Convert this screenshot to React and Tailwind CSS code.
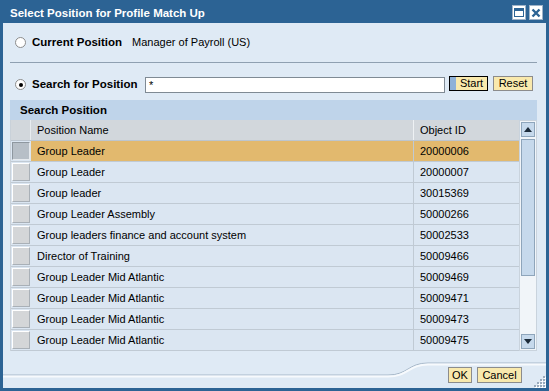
import React from "react";

const rows = [
  ["Group Leader", "20000006"],
  ["Group Leader", "20000007"],
  ["Group leader", "30015369"],
  ["Group Leader Assembly", "50000266"],
  ["Group leaders finance and account system", "50002533"],
  ["Director of Training", "50009466"],
  ["Group Leader Mid Atlantic", "50009469"],
  ["Group Leader Mid Atlantic", "50009471"],
  ["Group Leader Mid Atlantic", "50009473"],
  ["Group Leader Mid Atlantic", "50009475"],
];

function Radio({ checked }) {
  return (
    <span className="w-[11px] h-[11px] rounded-full border border-[#8c8c8c] bg-white flex items-center justify-center shrink-0">
      {checked && <span className="w-[4px] h-[4px] rounded-full bg-black" />}
    </span>
  );
}

export default function App() {
  return (
    <div
      className="w-[549px] h-[391px] bg-[#2c6394] flex flex-col px-[3px] pb-[3px] text-black"
      style={{ fontFamily: '"Liberation Sans", Arial, sans-serif' }}
    >
      {/* Title bar */}
      <div className="h-[23px] flex items-center pl-[7px] pr-[3px]">
        <div className="text-white font-bold text-[11.5px] leading-none pt-[4px] flex-1">
          Select Position for Profile Match Up
        </div>
        <div className="flex gap-[3px] pt-[2px]">
          <div className="w-[14px] h-[15px] bg-white border border-[#9fb3c8] flex items-center justify-center">
            <div className="w-[10px] h-[9px] border border-[#2c6394] border-t-[3px]" />
          </div>
          <div className="w-[14px] h-[15px] bg-white border border-[#9fb3c8] flex items-center justify-center">
            <svg width="10" height="10" viewBox="0 0 10 10">
              <path d="M1.5 1.5 L8.5 8.5 M8.5 1.5 L1.5 8.5" stroke="#2c6394" strokeWidth="2.4" />
            </svg>
          </div>
        </div>
      </div>

      {/* Body */}
      <div className="flex-1 bg-[#dfeaf5] flex flex-col pl-[7px] pr-[9px] relative">
        {/* Current position */}
        <div className="mt-[11px] h-[16px] flex items-center pl-[5px]">
          <Radio />
          <span className="ml-[6px] font-bold text-[11.5px] pt-px">Current Position</span>
          <span className="ml-[10px] text-[11px] pt-px">Manager of Payroll (US)</span>
        </div>

        <div className="mt-[12px] h-px bg-[#8fa0b1]" />

        {/* Search */}
        <div className="mt-[13px] h-[17px] flex items-center pl-[5px]">
          <Radio checked />
          <span className="ml-[6px] w-[113px] font-bold text-[11.5px]">Search for Position</span>
          <div className="w-[300px] h-[16px] mt-[1px] bg-white border border-[#7f8a94] text-[11px] leading-[14px] pl-[3px]">
            *
          </div>
          <div className="ml-[4px] w-[39px] h-[15px] self-start bg-[#f9e9ad] border border-black flex text-[11px] leading-[13px]">
            <div className="w-[6px] bg-[#8fb1d8]" />
            <div className="flex-1 text-center">Start</div>
          </div>
          <div className="ml-[5px] w-[40px] h-[15px] self-start bg-[#f9e9ad] border border-[#8c8c8c] text-[11px] leading-[13px] text-center">
            Reset
          </div>
        </div>

        {/* Table */}
        <div className="mt-[7px] flex flex-col">
          <div className="h-[20px] bg-[#bfd4ea] flex items-center pl-[10px] pt-px font-bold text-[11.5px]">
            Search Position
          </div>
          <div className="flex">
            <div className="w-[509px] flex flex-col border-l border-[#c9d1d9]">
              <div className="h-[21px] flex bg-[#d2d7dc] border-b border-[#bcc5ce] text-[11px]">
                <div className="w-[20px] border-r border-[#e8ecf0]" />
                <div className="w-[383px] border-r border-[#eef1f4] pl-[6px] pt-px flex items-center">Position Name</div>
                <div className="flex-1 pl-[6px] pt-px flex items-center">Object ID</div>
              </div>
              {rows.map(([name, id], i) => {
                const sel = i === 0;
                return (
                  <div
                    key={i}
                    className={
                      "h-[21px] flex text-[11px] border-b border-[#c0cad4] " +
                      (sel ? "bg-[#e2b96e]" : "bg-[#dbe6f2]")
                    }
                  >
                    <div className="w-[20px] p-[1px] bg-[#dbe6f2]">
                      <div
                        className={
                          "w-full h-full border " +
                          (sel
                            ? "bg-[#b7bfc7] border-t-[#8e979f] border-l-[#8e979f] border-r-[#e6eaee] border-b-[#e6eaee]"
                            : "bg-[#d4d6d8] border-t-white border-l-white border-r-[#a9b0b7] border-b-[#a9b0b7]")
                        }
                      />
                    </div>
                    <div className="w-[383px] border-r border-[#c0cad4] pl-[6px] pt-px flex items-center">{name}</div>
                    <div className="flex-1 pl-[6px] pt-px flex items-center">{id}</div>
                  </div>
                );
              })}
            </div>
            {/* Scrollbar */}
            <div className="w-[18px] bg-[#f1f5f9] border border-[#c9d3dd] flex flex-col items-center pt-px pb-px">
              <div className="w-[14px] h-[15px] bg-[#c6d9ec] border border-[#8ea5bb] flex items-center justify-center">
                <svg width="8" height="5" viewBox="0 0 8 5">
                  <path d="M0 5 L4 0 L8 5 Z" fill="#1c2b3a" />
                </svg>
              </div>
              <div className="w-[14px] h-[137px] mt-[2px] bg-[#c6d9ec] border border-[#8ea5bb]" />
              <div className="flex-1" />
              <div className="w-[14px] h-[15px] bg-[#c6d9ec] border border-[#8ea5bb] flex items-center justify-center">
                <svg width="8" height="5" viewBox="0 0 8 5">
                  <path d="M0 0 L8 0 L4 5 Z" fill="#1c2b3a" />
                </svg>
              </div>
            </div>
          </div>
        </div>

        {/* Footer */}
        <div className="flex-1 relative">
          <svg
            className="absolute left-[-7px] top-0 w-[543px] h-[37px]"
            viewBox="0 0 543 37"
          >
            <path
              d="M0 24 L385 24 C405 24 405 12 425 12 L543 12"
              fill="none"
              stroke="#a7b8c9"
              strokeWidth="1"
            />
            <path
              d="M0 25.5 L385 25.5 C405 25.5 406 13.5 425 13.5 L543 13.5"
              fill="none"
              stroke="#f7fafd"
              strokeWidth="2"
            />
          </svg>
          <div className="relative flex justify-end gap-[5px] pt-[16px] pr-[15px]">
            <div className="w-[24px] h-[16px] bg-[#f9e9ad] border border-[#8c8c8c] text-[11px] leading-[14px] text-center">
              OK
            </div>
            <div className="w-[45px] h-[16px] bg-[#f9e9ad] border border-[#8c8c8c] text-[11px] leading-[14px] text-center">
              Cancel
            </div>
          </div>
        </div>
        <svg className="absolute right-0 bottom-0" width="12" height="13" viewBox="0 0 12 13">
          {[
            [9, 1], [6, 4], [9, 4], [3, 7], [6, 7], [9, 7], [0, 10], [3, 10], [6, 10], [9, 10],
          ].map(([x, y], i) => (
            <g key={i}>
              <rect x={x + 1} y={y + 1} width="2" height="2" fill="#ffffff" />
              <rect x={x} y={y} width="2" height="2" fill="#9aabbc" />
            </g>
          ))}
        </svg>
      </div>
    </div>
  );
}
